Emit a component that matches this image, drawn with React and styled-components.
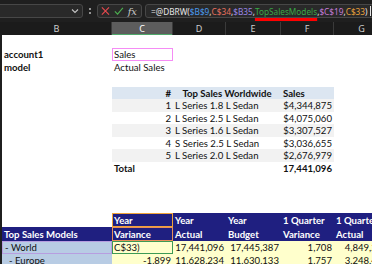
import React from 'react';
import styled, { createGlobalStyle } from 'styled-components';

const GlobalStyle = createGlobalStyle`
  html, body {
    margin: 0;
    padding: 0;
    background: #ffffff;
    overflow: hidden;
  }
  #root {
    width: 372px;
    height: 264px;
    overflow: hidden;
  }
`

const Window = styled.div`
  width: 372px;
  height: 264px;
  overflow: hidden;
  background: #ffffff;
`

const TopBar = styled.div`
  display: flex;
  align-items: center;
  height: 22px;
  background: #1f1f1f;
  font-family: "Noto Sans", sans-serif;
`

const Box = styled.div`
  display: flex;
  align-items: center;
  height: 14px;
  background: #292929;
  border: 1px solid #474747;
  border-radius: 3px;
  box-sizing: border-box;
`

const NameBox = styled(Box)`
  width: 87px;
  margin-left: -4px;
  justify-content: flex-end;
  padding-right: 3px;
`

const Kebab = styled.div`
  width: 14px;
  display: flex;
  flex-direction: column;
  align-items: center;
  gap: 2px;
  span {
    width: 2px;
    height: 2px;
    border-radius: 1px;
    background: #bdbdbd;
  }
`

const IconBox = styled(Box)`
  width: 45px;
  gap: 4px;
  padding: 0 3px;
  justify-content: space-between;
`

const Fx = styled.span`
  font-family: "DejaVu Serif", "Liberation Serif", serif;
  font-style: italic;
  font-size: 10px;
  color: #c8c8c8;
  padding-right: 1px;
`

const FormulaBox = styled(Box)`
  flex: 1;
  margin-left: 3px;
  margin-right: -8px;
  padding-left: 5px;
  font-size: 8.25px;
  color: #e6e6e6;
  white-space: nowrap;
  overflow: visible;
`

const Ref = styled.span`
  color: ${p => p.$c};
`

const Named = styled.span`
  color: #39a846;
  text-decoration: underline;
  text-decoration-color: #ff0000;
  text-decoration-thickness: 3px;
  text-underline-offset: 3px;
`

const Caret = styled.span`
  display: inline-block;
  width: 1px;
  height: 10px;
  margin-left: 2px;
  background: #e6e6e6;
  vertical-align: middle;
`

const cols = '2px 110px 61px 53px 55px 53px 56px'

const HeadRow = styled.div`
  display: grid;
  grid-template-columns: ${cols};
  height: 13px;
  background: #1b1b1b;
  font-family: "Noto Sans", sans-serif;
  font-size: 9px;
  color: #cfcfcf;
`

const ColHead = styled.div`
  display: flex;
  align-items: center;
  justify-content: center;
  border-right: 1px solid #3a3a3a;
  background: ${p => (p.$active ? '#5d5d5d' : 'transparent')};
  color: ${p => (p.$active ? '#ffffff' : '#cfcfcf')};
  box-shadow: ${p => (p.$active ? 'inset 0 -1px 0 #4ea86a' : 'none')};
`

const Sheet = styled.div`
  font-family: "Lato", "Liberation Sans", sans-serif;
  font-size: 9.6px;
  color: #111111;
`

const Row = styled.div`
  display: grid;
  grid-template-columns: ${cols};
  height: ${p => p.$h}px;
`

const Edge = styled.div`
  background: #1f1f1f;
`

const Cell = styled.div`
  grid-column: span ${p => p.$span || 1};
  display: flex;
  align-items: center;
  justify-content: ${p => (p.$right ? 'flex-end' : p.$center ? 'center' : 'flex-start')};
  padding: 0 2px 0 ${p => p.$indent || 2}px;
  white-space: nowrap;
  overflow: visible;
  font-weight: ${p => (p.$bold ? 700 : 400)};
  background: ${p => p.$bg || 'transparent'};
  color: ${p => p.$color || '#111111'};
  box-shadow: ${p => (p.$ring ? `inset 0 0 0 1px ${p.$ring}` : 'none')};
  min-width: 0;
`

const NAVY = '#1f1f80'
const HeadCell = props => <Cell $bg={NAVY} $color="#ffffff" $bold {...props} />

const Blank = ({ h }) => (
  <Row $h={h}>
    <Edge />
  </Row>
)

const topModels = [
  ['1', 'L Series 1.8 L Sedan', '$4,344,875'],
  ['2', 'L Series 2.5 L Sedan', '$4,075,060'],
  ['3', 'L Series 1.6 L Sedan', '$3,307,527'],
  ['4', 'S Series 2.5 L Sedan', '$3,036,655'],
  ['5', 'L Series 2.0 L Sedan', '$2,676,979'],
]
const rowHeights = [13, 12, 13, 12, 13]

const regions = [
  { name: '- World', indent: 3, edit: true, vals: ['C$33)', '17,441,096', '17,445,387', '1,708', '4,849,227'] },
  { name: '- Europe', indent: 7, vals: ['-1,899', '11,628,234', '11,630,133', '1,757', '3,248,401'] },
]

const Cross = () => (
  <svg width="10" height="10" viewBox="0 0 10 10">
    <path d="M1 1 L9 9 M9 1 L1 9" stroke="#e5484d" strokeWidth="1.3" fill="none" />
  </svg>
)

const Check = () => (
  <svg width="11" height="10" viewBox="0 0 11 10">
    <path d="M1 5.5 L4 8.5 L10 1.5" stroke="#4caf50" strokeWidth="1.3" fill="none" />
  </svg>
)

const Chevron = () => (
  <svg width="8" height="6" viewBox="0 0 8 6">
    <path d="M1 1.5 L4 4.5 L7 1.5" stroke="#c4c4c4" strokeWidth="1.1" fill="none" />
  </svg>
)

export default function App() {
  return (
    <Window>
      <GlobalStyle />
      <TopBar>
        <NameBox>
          <Chevron />
        </NameBox>
        <Kebab>
          <span />
          <span />
        </Kebab>
        <IconBox>
          <Cross />
          <Check />
          <Fx>fx</Fx>
        </IconBox>
        <FormulaBox>
          =@DBRW(<Ref $c="#4a9bf0">$B$9</Ref>,<Ref $c="#e8705e">C$34</Ref>,
          <Ref $c="#9a86e6">$B35</Ref>,<Named>TopSalesModels</Named>,
          <Ref $c="#c77cd8">$C$19</Ref>,<Ref $c="#e9a23b">C$33</Ref>)<Caret />
        </FormulaBox>
      </TopBar>

      <HeadRow>
        <div />
        <ColHead>B</ColHead>
        <ColHead $active>C</ColHead>
        <ColHead>D</ColHead>
        <ColHead>E</ColHead>
        <ColHead>F</ColHead>
        <ColHead>G</ColHead>
      </HeadRow>

      <Sheet>
        <Blank h={13} />
        <Row $h={13}>
          <Edge />
          <Cell $bold>account1</Cell>
          <Cell $ring="#f58cf5">Sales</Cell>
        </Row>
        <Row $h={13}>
          <Edge />
          <Cell $bold>model</Cell>
          <Cell>Actual Sales</Cell>
        </Row>
        <Blank h={13} />
        <Row $h={12}>
          <Edge />
          <Cell />
          <Cell $bg="#dce6f1" $right $bold>#</Cell>
          <Cell $bg="#dce6f1" $span={2} $center $bold>Top Sales Worldwide</Cell>
          <Cell $bg="#dce6f1" $bold>Sales</Cell>
        </Row>
        {topModels.map(([n, model, sales], i) => {
          const bg = i % 2 === 0 ? '#f2f2f2' : '#ffffff'
          return (
            <Row $h={rowHeights[i]} key={n}>
              <Edge />
              <Cell />
              <Cell $bg={bg} $right>{n}</Cell>
              <Cell $bg={bg} $span={2}>{model}</Cell>
              <Cell $bg={bg} $right>{sales}</Cell>
            </Row>
          )
        })}
        <Row $h={13}>
          <Edge />
          <Cell />
          <Cell $bold>Total</Cell>
          <Cell $span={2} />
          <Cell $bold $right>17,441,096</Cell>
        </Row>
        <Blank h={13} />
        <Blank h={12} />
        <Blank h={13} />
        <Row $h={14}>
          <Edge />
          <Cell />
          <HeadCell $ring="#f0a43a">Year</HeadCell>
          <HeadCell>Year</HeadCell>
          <HeadCell>Year</HeadCell>
          <HeadCell>1 Quarter</HeadCell>
          <HeadCell>1 Quarter</HeadCell>
        </Row>
        <Row $h={14}>
          <Edge />
          <HeadCell>Top Sales Models</HeadCell>
          <HeadCell $ring="#e8905a">Variance</HeadCell>
          <HeadCell>Actual</HeadCell>
          <HeadCell>Budget</HeadCell>
          <HeadCell>Variance</HeadCell>
          <HeadCell>Actual</HeadCell>
        </Row>
        {regions.map(r => (
          <Row $h={13} key={r.name}>
            <Edge />
            <Cell $bg="#b8cce4" $indent={r.indent} $ring={r.edit ? '#b79ee0' : null}>
              {r.name}
            </Cell>
            {r.vals.map((v, i) =>
              i === 0 && r.edit ? (
                <Cell key={i} $bg="#ffffcc" $ring="#3c9a55">{v}</Cell>
              ) : (
                <Cell key={i} $bg="#ffffcc" $right>{v}</Cell>
              )
            )}
          </Row>
        ))}
      </Sheet>
    </Window>
  )
}
